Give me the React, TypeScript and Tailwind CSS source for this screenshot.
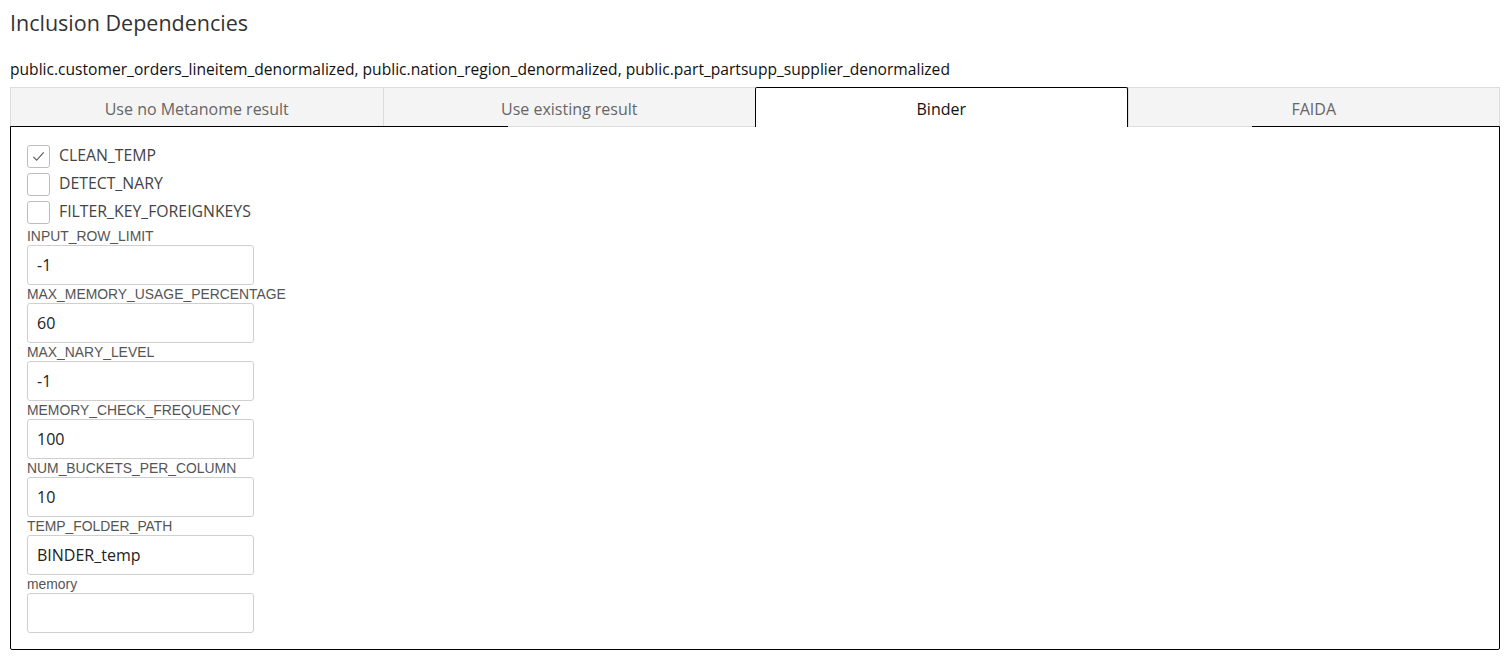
const tabs = ["Use no Metanome result", "Use existing result", "Binder", "FAIDA"];

const checks = [
  { name: "CLEAN_TEMP", checked: true },
  { name: "DETECT_NARY", checked: false },
  { name: "FILTER_KEY_FOREIGNKEYS", checked: false },
];

const fields = [
  { name: "INPUT_ROW_LIMIT", value: "-1" },
  { name: "MAX_MEMORY_USAGE_PERCENTAGE", value: "60" },
  { name: "MAX_NARY_LEVEL", value: "-1" },
  { name: "MEMORY_CHECK_FREQUENCY", value: "100" },
  { name: "NUM_BUCKETS_PER_COLUMN", value: "10" },
  { name: "TEMP_FOLDER_PATH", value: "BINDER_temp" },
  { name: "memory", value: "" },
];

const App = () => {
  const active = 2;

  return (
    <div className="bg-white px-[10px] font-['Open_Sans','Noto_Sans',sans-serif]">
      {/* title */}
      <h1 className="mt-[8px] text-[21.5px] leading-[30px] text-[#333] font-normal">Inclusion Dependencies</h1>
      <p className="mt-[19px] mb-[6px] text-[15.6px] leading-[24px] text-[#111]">
        public.customer_orders_lineitem_denormalized, public.nation_region_denormalized, public.part_partsupp_supplier_denormalized
      </p>

      {/* tabs */}
      <div className="grid grid-cols-4 h-[39px]">
        {tabs.map((t, i) =>
          i === active ? (
            <div
              key={t}
              className="relative z-20 h-[40px] flex items-center justify-center pt-[2px] bg-white border border-b-0 border-black rounded-t-[2px] text-[16px] text-[#111]"
            >
              {t}
            </div>
          ) : (
            <div
              key={t}
              className={
                "flex items-center justify-center pt-[2px] bg-[#f4f4f4] border-t border-l border-[#dcdcdc] text-[16px] text-[#666] " +
                (i === tabs.length - 1 ? "border-r" : "")
              }
            >
              {t}
            </div>
          )
        )}
      </div>

      {/* panel */}
      <div className="relative border border-black rounded-b-[2px] pl-[16px] pt-[15px] pb-[16px]">
        <div className="absolute z-10 top-[-1px] left-[497px] w-[744px] h-px bg-[#dcdcdc]"></div>

        {checks.map((c) => (
          <label key={c.name} className="flex items-center h-[28px] gap-[9px]">
            <span className="w-[23px] h-[23px] rounded-[3px] border border-[#bdbdbd] bg-white flex items-center justify-center">
              {c.checked && (
                <svg width="15" height="15" viewBox="0 0 16 16" fill="none" stroke="#555" strokeWidth="1.2">
                  <polyline points="2.5,8.5 6,12 13.5,3.5" />
                </svg>
              )}
            </span>
            <span className="text-[15.8px] text-[#444]">{c.name}</span>
          </label>
        ))}

        <div className="mt-[1px]">
          {fields.map((f) => (
            <div key={f.name}>
              <div className="h-[18px] leading-[18px] text-[13.9px] text-[#555] font-['Liberation_Sans',Arial,sans-serif]">
                {f.name}
              </div>
              <input
                type="text"
                defaultValue={f.value}
                className="block w-[227px] h-[40px] border border-[#cfcfcf] rounded-[3px] pl-[9px] text-[16px] text-[#222] outline-none"
              />
            </div>
          ))}
        </div>
      </div>
    </div>
  );
};

export default App;
